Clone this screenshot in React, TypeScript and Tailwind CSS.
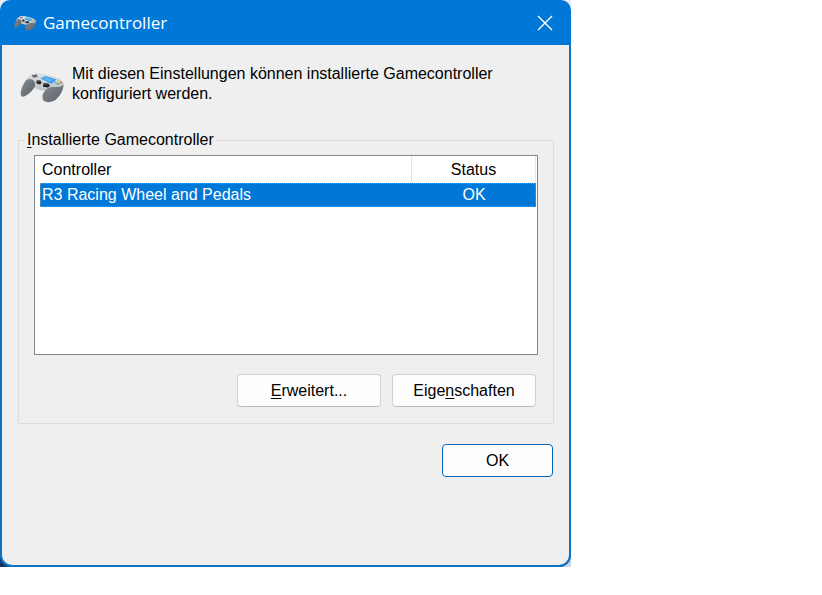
import React, { useState } from "react";

interface Controller {
  id: string;
  name: string;
  status: string;
}

const controllers: Controller[] = [
  { id: "r3", name: "R3 Racing Wheel and Pedals", status: "OK" },
];

function GamepadIcon({ className }: { className?: string }) {
  return (
    <svg viewBox="0 0 44 34" className={className} aria-hidden="true">
      <defs>
        <linearGradient id="grip" x1="0" y1="0" x2="1" y2="1">
          <stop offset="0" stopColor="#858b91" />
          <stop offset="0.5" stopColor="#70767c" />
          <stop offset="1" stopColor="#5a6066" />
        </linearGradient>
        <linearGradient id="body" x1="0" y1="0" x2="0" y2="1">
          <stop offset="0" stopColor="#e2e4e6" />
          <stop offset="1" stopColor="#bcc1c6" />
        </linearGradient>
      </defs>
      <path
        d="M4 12 C8 6 11 3 16 3 C24 3.500 33 6 39 8.500 C42 10 43.800 12 43.800 15 L42 20 L30 20 L22 20.500 L14 18 L5 18 Z"
        fill="url(#body)"
      />
      <path
        d="M0.800 22 C2 16 5 10 9 9 C13 8.500 15.500 12 15 15.500 C14 20 7 26 3 26.800 C1 26.500 0.300 25 0.800 22 Z"
        fill="url(#grip)"
      />
      <path
        d="M22.500 26 C23.500 20.500 28 17 33 17 C38 17 41 17.500 43.500 14.500 C43.500 20 40 26 36 29.500 C32 32.500 26 33 24 31 C22.500 29.500 22.300 28 22.500 26 Z"
        fill="url(#grip)"
      />
      <path d="M20.500 8.500 L25.500 6 L36.500 9.500 L31.500 13.800 Z" fill="#2f9bef" />
      <path d="M22.500 8.700 L26 7 L34 9.700 L30 11.800 Z" fill="#5cb6f7" />
      <path d="M12 5.500 L17.500 6.800 M16.500 4.500 L13.500 7.500" stroke="#5b6167" strokeWidth="1.500" />
      <path d="M16.500 10.500 L20.500 10.500 L21.500 13 L20 14.500 L16.500 13.500 Z" fill="#1d2227" />
      <path d="M23.500 13.300 L28.500 13.500 L30 16 L28 17.500 L23 16.800 Z" fill="#1d2227" />
      <ellipse cx="18.700" cy="11" rx="2" ry="0.800" fill="#545b62" />
      <ellipse cx="26" cy="14" rx="2.200" ry="0.800" fill="#545b62" />
      <ellipse cx="38.500" cy="10.800" rx="1.500" ry="1" fill="#e3c36a" />
      <ellipse cx="35.500" cy="12.500" rx="1.500" ry="1" fill="#7fb0d6" />
      <ellipse cx="41" cy="12.500" rx="1.500" ry="1" fill="#d87a63" />
      <ellipse cx="38" cy="14" rx="1.500" ry="1" fill="#63ad58" />
    </svg>
  );
}

export default function App() {
  const [selected, setSelected] = useState("r3");

  return (
    <main className="min-h-screen bg-white font-['Liberation_Sans',Arial,sans-serif] text-base leading-5 text-black">
      {/* Desktop showing behind the rounded corners */}
      <div className="max-w-[571px] bg-linear-to-r from-[#12365f] from-2% to-[#d3d6db] to-2%">
        <div className="bg-linear-to-b from-[#e8eef4] from-2% to-transparent to-2%">
          <div className="rounded-t-[10px] rounded-b-xl bg-[#0078d7]">
            <header className="flex h-[45px] items-center pr-4 pl-[14px] text-white">
              <GamepadIcon className="h-[18px] w-[22px]" />
              <h1 className="ml-[7px] flex-1 font-['Open_Sans','Noto_Sans',sans-serif] text-[17px] leading-6">
                Gamecontroller
              </h1>
              <button type="button" aria-label="Schließen" className="flex size-5 items-center justify-center">
                <svg viewBox="0 0 16 16" className="size-4" aria-hidden="true">
                  <path d="M1 1 L15 15 M15 1 L1 15" stroke="white" strokeWidth="1.400" />
                </svg>
              </button>
            </header>

            <div className="rounded-b-xl border-2 border-t-0 border-[#0f72c4] bg-[#efefef] pt-[19px] pr-[15px] pb-[88px] pl-4">
              <div className="flex items-start">
                <GamepadIcon className="mt-[6px] ml-[2px] h-[34px] w-11 shrink-0" />
                <p className="ml-2 max-w-[440px]">
                  Mit diesen Einstellungen können installierte Gamecontroller konfiguriert werden.
                </p>
              </div>

              <fieldset className="mt-[26px] border border-[#dcdcdc] px-[6px] pb-4">
                <legend className="px-[2px]">
                  <span className="underline underline-offset-2">I</span>nstallierte Gamecontroller
                </legend>
                <div className="px-[9px] pt-[5px]">
                  <div className="h-[200px] border border-[#828790] bg-white pr-px pl-[5px]">
                    <table className="w-full table-fixed border-separate border-spacing-0">
                      <thead>
                        <tr className="h-[27px]">
                          <th className="w-3/4 border-r border-[#e5e5e5] px-[2px] text-left font-normal">
                            Controller
                          </th>
                          <th className="w-1/4 border-r border-[#e5e5e5] font-normal">Status</th>
                        </tr>
                      </thead>
                      <tbody>
                        {controllers.map((c) => (
                          <tr
                            key={c.id}
                            onClick={() => setSelected(c.id)}
                            className={
                              selected === c.id
                                ? "h-6 bg-[#0078d7] text-white outline-1 -outline-offset-1 outline-[#8f8f8f] outline-dotted"
                                : "h-6"
                            }
                          >
                            <td className="px-[2px]">{c.name}</td>
                            <td className="text-center">{c.status}</td>
                          </tr>
                        ))}
                      </tbody>
                    </table>
                  </div>

                  <div className="mt-[19px] flex justify-end gap-[11px] pr-[2px]">
                    <button
                      type="button"
                      className="h-[33px] w-36 rounded border border-[#d0d0d0] border-b-[#bcbcbc] bg-[#fdfdfd]"
                    >
                      <span className="underline underline-offset-2">E</span>rweitert...
                    </button>
                    <button
                      type="button"
                      className="h-[33px] w-36 rounded border border-[#d0d0d0] border-b-[#bcbcbc] bg-[#fdfdfd]"
                    >
                      Eige<span className="underline underline-offset-2">n</span>schaften
                    </button>
                  </div>
                </div>
              </fieldset>

              <div className="mt-5 flex justify-end pr-px">
                <button type="button" className="h-[33px] w-[111px] rounded border border-[#0067c0] bg-[#fdfdfd]">
                  OK
                </button>
              </div>
            </div>
          </div>
        </div>
      </div>
    </main>
  );
}
